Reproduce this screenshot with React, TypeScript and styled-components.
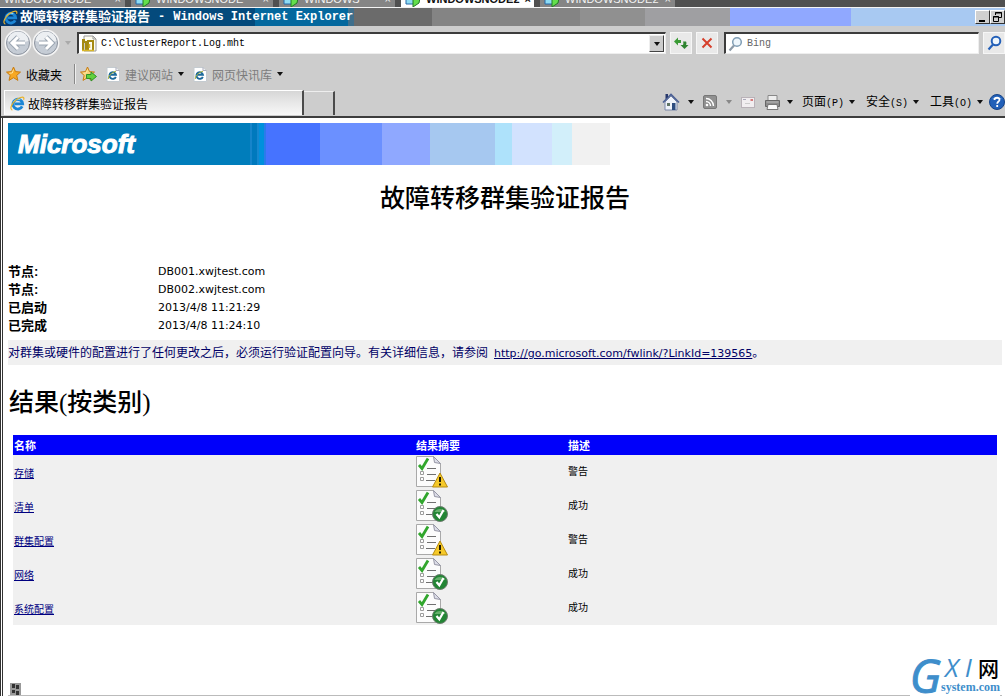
import React from "react";
import styled, { createGlobalStyle } from "styled-components";

const ui = `"Liberation Sans", "Noto Sans CJK SC", sans-serif`;
const mono = `"Liberation Mono", "Noto Sans CJK SC", monospace`;
const report = `"DejaVu Sans", "Noto Sans CJK SC", sans-serif`;
const serif = `"Liberation Serif", "Noto Sans CJK SC", serif`;

const GlobalStyle = createGlobalStyle`
  * { box-sizing: border-box; }
  body { margin: 0; background: #fff; font-family: ${ui}; font-size: 12px; color: #000; }
  button { font: inherit; color: inherit; padding: 0; margin: 0; border: 0; background: none; }
  svg { display: block; flex: none; }
`;

const Window = styled.div`
  display: flex;
  flex-direction: column;
  height: 100vh;
  overflow: hidden;
  position: relative;
`;

const SessionStrip = styled.nav`
  display: flex;
  gap: 6px;
  height: 8px;
  flex: none;
  overflow: hidden;
  background: #505050;
  border-bottom: 1px solid #f4f4f4;
`;

const SessionTab = styled.button<{ $active?: boolean; $width: number }>`
  display: flex;
  align-items: center;
  gap: 5px;
  flex: none;
  width: ${(p) => p.$width}px;
  height: 20px;
  margin-top: -11px;
  padding: 0 4px;
  font-size: 11px;
  line-height: 20px;
  font-weight: ${(p) => (p.$active ? "bold" : "normal")};
  background: ${(p) => (p.$active ? "#ffffff" : "#858585")};
  color: ${(p) => (p.$active ? "#111" : "#f4f4f4")};
  span:last-child { margin-left: auto; }
`;

const TitleBar = styled.header`
  display: flex;
  align-items: center;
  height: 18px;
  flex: none;
  padding-left: 3px;
  color: #fff;
  font: bold 13px/18px ${ui};
  background: linear-gradient(
    90deg,
    #06376c 0 110px, #044a7c 110px 255px, #04689e 255px 348px, #3f6f8c 348px 354px,
    #6b6b6b 354px 432px, #848484 432px 580px, #909090 580px 645px, #9f9fa2 645px 730px,
    #90a8ff 730px 851px, #a8c9f2 851px
  );
`;

const TitleText = styled.h1`
  display: flex;
  gap: 8px;
  flex: 1;
  margin: 0 0 0 2px;
  font: inherit;
  white-space: pre;
`;

const TitleLatin = styled.span`
  font: bold 12px/18px "Liberation Mono", monospace;
`;

const CaptionButton = styled.button`
  width: 15px;
  height: 14px;
  background: #d0d0d0;
  border: 1px solid;
  border-color: #fff #333 #333 #fff;
`;

const Chrome = styled.div`
  flex: none;
  background: #cdcdcd;
  border-left: 1px solid #222;
`;

const NavRow = styled.div`
  display: flex;
  align-items: center;
  height: 34px;
  padding-left: 3px;
`;

const BackForward = styled.div`
  display: flex;
  width: 73px;
`;

const PlainButton = styled.button`
  display: flex;
  align-items: center;
`;

const AddressBox = styled.div`
  display: flex;
  align-items: center;
  flex: 1;
  height: 22px;
  padding: 1px 1px 1px 2px;
  background: #fff;
  border: 1px solid;
  border-color: #3c3c3c #eee #eee #3c3c3c;
  border-width: 2px 1px 1px 2px;
`;

const TextInput = styled.input`
  flex: 1;
  min-width: 0;
  height: 18px;
  margin-left: 4px;
  padding: 0;
  border: 0;
  outline: 0;
  background: transparent;
  font: 10px/18px ${mono};
  color: #000;
  &::placeholder { color: #666; opacity: 1; }
`;

const DropButton = styled.button`
  display: flex;
  align-items: center;
  justify-content: center;
  width: 15px;
  height: 17px;
  background: #cdcdcd;
  border: 1px solid;
  border-color: #eee #444 #444 #eee;
`;

const ToolButton = styled.button`
  display: flex;
  align-items: center;
  justify-content: center;
  flex: none;
  width: 22px;
  height: 22px;
  margin-left: 4px;
  background: #e9e9e9;
  border: 1px solid #f6f6f6;
`;

const SearchBox = styled(AddressBox)`
  flex: 0 0 255px;
  margin-left: 6px;
`;

const FavoritesRow = styled.div`
  display: flex;
  align-items: center;
  height: 28px;
  padding-left: 5px;
`;

const LinkButton = styled(PlainButton)<{ $muted?: boolean }>`
  gap: 5px;
  margin-right: 9px;
  color: ${(p) => (p.$muted ? "#7c7c7c" : "#000")};
`;

const Divider = styled.span`
  width: 2px;
  height: 20px;
  margin: 0 4px 0 3px;
  border-left: 1px solid #888;
  border-right: 1px solid #eee;
`;

const TabRow = styled.div`
  display: flex;
  align-items: flex-end;
  height: 30px;
  border-bottom: 2px solid #3d3d3d;
`;

const PageTab = styled.button`
  display: flex;
  align-items: center;
  gap: 3px;
  width: 300px;
  height: 25px;
  margin: 0 0 1px 3px;
  padding: 1px 0 0 5px;
  border: solid #fff;
  border-width: 1px 0 0 1px;
  border-right: 2px solid #4a4a4a;
  background: linear-gradient(#d6d6d6, #e8e8e8 50%, #f8f8f8);
`;

const NewTab = styled.button`
  width: 31px;
  height: 24px;
  margin-bottom: 1px;
  border-top: 1px solid #eee;
  border-right: 2px solid #4a4a4a;
  background: #cdcdcd;
`;

const CommandBar = styled.div`
  display: flex;
  align-items: center;
  height: 28px;
  margin-left: auto;
`;

const Command = styled(PlainButton)<{ $gap?: number }>`
  gap: ${(p) => p.$gap ?? 6}px;
  margin-right: 9px;
  white-space: nowrap;
`;

const Menu = styled(PlainButton)`
  gap: 5px;
  margin-right: 11px;
  white-space: nowrap;
  &:last-of-type { margin: 0; }
`;

const MenuGroup = styled.div`
  display: flex;
  margin-right: 6px;
`;

const Key = styled.span`
  font: 10px/16px ${mono};
`;

const Page = styled.main`
  flex: 1;
  min-height: 0;
  display: flex;
  flex-direction: column;
  padding: 5px 3px 0 5px;
  border-left: 3px double #333;
  background: #fff;
`;

const Banner = styled.div`
  display: flex;
  flex: none;
  width: 602px;
  max-width: 100%;
  height: 42px;
  padding-left: 10px;
  background: linear-gradient(
    90deg,
    #007dbb 0 242px, #1684ca 242px 244px, #0079bd 244px 249px, #1687ce 249px 251px,
    #0090dc 251px 256px, #2b7bea 256px 258px, #4673ff 258px 312px, #6b90ff 312px 374px,
    #8fa8ff 374px 422px, #a6c8f0 422px 487px, #aee2fb 487px 504px, #d2e2fe 504px 544px,
    #d2effa 544px 564px, #f1f1f1 564px
  );
`;

const Logo = styled.span`
  font: italic bold 26px/43px "Liberation Sans", Arial, sans-serif;
  color: #fff;
  -webkit-text-stroke: 1px #fff;
`;

const Title = styled.h1`
  flex: none;
  margin: 16px 0 46px;
  font: 500 25px/36px ${serif};
  text-align: center;
`;

const Summary = styled.table`
  flex: none;
  align-self: flex-start;
  border-collapse: collapse;
  font: 11px/18px ${report};
  th {
    width: 150px;
    padding: 0;
    text-align: left;
    font: bold 13px/18px ${ui};
  }
  td { padding: 0; }
`;

const Notice = styled.p`
  flex: none;
  margin: 5px 0 0;
  padding-top: 1px;
  background: #f0f0f0;
  color: #000066;
  font: 12px/24px ${ui};
  a { margin-left: 6px; color: #000066; font: 11px/20px ${report}; }
`;

const SectionTitle = styled.h2`
  flex: none;
  margin: 20px 0 14px 1px;
  font: 500 25px/36px ${serif};
`;

const Results = styled.table`
  flex: none;
  margin: 0 5px;
  border-collapse: collapse;
  table-layout: fixed;
  background: #f0f0f0;
  font: 10px/16px ${ui};
  th {
    height: 20px;
    padding: 2px 1px 0;
    background: #0000fa;
    color: #fff;
    text-align: left;
    font: bold 11px/16px ${ui};
  }
  td { height: 34px; padding: 0 1px; vertical-align: middle; }
  td:first-child { padding-top: 4px; }
  a { color: #000080; }
`;

const StatusLine = styled.footer`
  display: flex;
  align-items: flex-end;
  margin-top: auto;
  padding-left: 2px;
  border-bottom: 1px solid #bbb;
`;

const Watermark = styled.div`
  position: absolute;
  right: 5px;
  bottom: 0;
  display: flex;
  height: 42px;
  background: #fff;
  color: #3e8ecb;
`;

const BigG = styled.span`
  font: italic 46px/42px "Open Sans", sans-serif;
  -webkit-text-stroke: 1px #3e8ecb;
`;

const MarkColumn = styled.span`
  display: flex;
  flex-direction: column;
`;

const MarkTop = styled.span`
  display: flex;
  justify-content: space-between;
  padding: 0 1px 0 4px;
  font: italic 26px/26px "Open Sans", sans-serif;
  b { color: #000; font: 500 21px/26px "Noto Sans CJK SC", sans-serif; }
`;

const MarkBottom = styled.span`
  font: bold 12px/14px "Liberation Serif", serif;
`;

const Caret = ({ color = "#111" }: { color?: string }) => (
  <svg width="6" height="4" viewBox="0 0 6 4"><path d="M0 0h6L3 4z" fill={color} /></svg>
);

const IELogo = ({ size = 15 }: { size?: number }) => (
  <svg width={size} height={size} viewBox="0 0 16 16" fill="none">
    <path d="M13 11A5.200 5.200 0 1 1 13.500 8.300H5" stroke="#1c86d6" strokeWidth="3" />
    <path d="M4 6.500A5 5 0 0 1 11 4" stroke="#8ad2f8" strokeWidth="1.300" />
    <path d="M2.500 15C-1 14 2 7.500 7 3.800 12 .3 16 .3 14.500 4" stroke="#e9b32b" strokeWidth="1.300" />
  </svg>
);

const IEPage = () => (
  <svg width="14" height="15" viewBox="0 0 14 15" fill="none">
    <path d="M1 .5h9l3.500 3v11H1z" fill="#fff" stroke="#c4cbd0" />
    <path d="M10 .5v3h3.500" stroke="#aab" />
    <path d="M9.800 9.800A3.300 3.300 0 1 1 10 7.900H4.500" stroke="#1d6a9c" strokeWidth="1.900" />
    <path d="M2.500 12C1.500 10 5 5.500 10 4.200" stroke="#a5ae35" />
  </svg>
);

const RoundArrow = ({ flip }: { flip?: boolean }) => (
  <svg width="28" height="28" viewBox="0 0 28 28" fill="none">
    <circle cx="14" cy="14" r="12.500" fill="#dfe3e8" stroke="#f4f4f4" strokeWidth="2" />
    <circle cx="14" cy="14" r="11.500" fill="#c5ccd5" stroke="#8d949f" />
    <path d="M3.500 12a10.500 9.500 0 0 1 21 0q-10 3-21 0" fill="#eceff2" />
    <path
      d={flip ? "M7 14h12M14 8l6 6-6 6" : "M21 14H9M14 8l-6 6 6 6"}
      stroke="#9aa5b1" strokeWidth="5"
    />
    <path
      d={flip ? "M7 14h12M14 8l6 6-6 6" : "M21 14H9M14 8l-6 6 6 6"}
      stroke="#fff" strokeWidth="3"
    />
  </svg>
);

const Star = ({ add }: { add?: boolean }) => (
  <svg width={add ? 17 : 15} height="16" viewBox={add ? "0 0 17 16" : "0 0 15 16"}>
    <path
      d="M7.500 1l2 4.600 5 .5-3.800 3.300 1.200 5-4.400-2.700L3 14.400l1.200-5L.5 6.100l5-.5z"
      fill={add ? "#f5d37a" : "#f7a823"} stroke="#c97d12"
    />
    <path d="M7.500 3.500L6.300 7l-3 .2" stroke="#ffe59b" fill="none" />
    {add && <path d="M6.500 8.500h4.500V6l5.500 4.500L11 15v-2.500H6.500z" fill="#62d13c" stroke="#2f9228" />}
  </svg>
);

const Magnifier = ({ strong }: { strong?: boolean }) => (
  <svg width="15" height="16" viewBox="0 0 15 16" fill="none">
    <circle cx="9" cy="6" r="4.300" fill="#eef6fc" stroke={strong ? "#2460b8" : "#7f9db5"} strokeWidth={strong ? 2 : 1.5} />
    <path d="M6 9.500L1.500 14.500" stroke={strong ? "#2460b8" : "#8c9aa8"} strokeWidth="2.200" />
  </svg>
);

const PageFile = () => (
  <svg width="16" height="17" viewBox="0 0 16 17" fill="none">
    <path d="M3 1h9l3 3v12H3z" fill="#fffdf0" stroke="#999" />
    <path d="M12 1v3h3" stroke="#999" />
    <path d="M1 5h3M2 15V7h3v8M7 15V6h5v9" stroke="#a58a12" strokeWidth="2" />
    <path d="M1 15.500h12M8.500 9v4" stroke="#d8b62a" strokeWidth="1.500" />
  </svg>
);

const Refresh = () => (
  <svg width="16" height="14" viewBox="0 0 16 14" fill="none">
    <path d="M1 5.500L5 1.500v2.500h3v3H5v2.500z" fill="#3a9b35" />
    <path d="M11.500 13L7.500 9h2.500c.5-1.500.5-2.500 0-3.500h3c.6 1 .6 2.200 0 3.500h2.500z" fill="#2f8530" />
  </svg>
);

const Stop = () => (
  <svg width="12" height="12" viewBox="0 0 12 12" fill="none">
    <path d="M1.500 1.500l9 9M10.500 1.500l-9 9" stroke="#d6402c" strokeWidth="2" />
  </svg>
);

const Home = () => (
  <svg width="18" height="18" viewBox="0 0 18 18" fill="none">
    <path d="M3 9l6-6 6 6v8H3z" fill="#eef2fa" stroke="#7886a8" />
    <path d="M1 9.500L9 1.500l8 8" stroke="#4a5f94" strokeWidth="1.600" />
    <path d="M3.500 1h2.500v3L3.500 6z" fill="#27386c" />
    <path d="M10 10h3.500v7H10z" fill="#2c4c80" />
    <path d="M5 10h3v3H5z" fill="#5f7466" />
  </svg>
);

const Feed = () => (
  <svg width="14" height="14" viewBox="0 0 14 14" fill="none">
    <rect x=".5" y=".5" width="13" height="13" rx="1.500" fill="#909090" stroke="#777" />
    <circle cx="4" cy="10" r="1.300" fill="#fff" />
    <path d="M3 6.500A4.500 4.500 0 0 1 7.500 11M3 3.500A7.500 7.500 0 0 1 10.500 11" stroke="#fff" strokeWidth="1.400" />
  </svg>
);

const Mail = () => (
  <svg width="14" height="11" viewBox="0 0 14 11" fill="none">
    <rect x=".5" y=".5" width="13" height="10" fill="#f1eef0" stroke="#b9b2b8" />
    <path d="M2 2.500h3" stroke="#a8a8b8" />
    <path d="M9.500 2h2.500v2H9.500z" fill="#d67b7b" />
    <path d="M4 6.500h5" stroke="#ccc" />
  </svg>
);

const Printer = () => (
  <svg width="17" height="15" viewBox="0 0 17 15" fill="none">
    <path d="M4 .5h9v5H4z" fill="#eee" stroke="#888" />
    <path d="M1.500 5.500h14v6h-14z" fill="#8b8b8b" stroke="#666" />
    <path d="M2.500 7h12" stroke="#bbb" />
    <path d="M4 9.500h9l1 5H3z" fill="#fafafa" stroke="#777" />
  </svg>
);

const Help = () => (
  <svg width="16" height="16" viewBox="0 0 16 16" fill="none">
    <circle cx="8" cy="8" r="7.500" fill="#2260b8" stroke="#174488" />
    <path d="M3 5a6 4 0 0 1 10 0" fill="#6ea1e0" />
    <path d="M5.500 6C5.500 3 10.800 3 10.500 6c-.2 1.500-2.300 1.700-2.300 3.800M8.200 11v2" stroke="#fff" strokeWidth="1.800" />
  </svg>
);

const ReportIcon = ({ warn }: { warn?: boolean }) => (
  <svg width="32" height="32" viewBox="0 0 32 32" fill="none" role="img" aria-label={warn ? "警告" : "成功"}>
    <path d="M.5.5h17l7 7v23H.5z" fill="#fcfcfc" stroke="#a9a9a9" />
    <path d="M17.500.5l1 6 6 1z" fill="#dcdde8" stroke="#9696a5" />
    <path d="M11 12.500h9M11 18.500h9M10 24.500h9" stroke="#707070" />
    <path d="M4.500 15.500h3v3h-3zM4.500 21.500h3v3h-3z" fill="#fff" stroke="#9c9c9c" />
    <path d="M3 9l3 3.500 6-10" stroke="#31a62d" strokeWidth="2.800" />
    {warn ? (
      <>
        <path d="M24 17l7.500 14h-15z" fill="#f6c928" stroke="#b68b13" strokeLinejoin="round" />
        <path d="M24 21v5M24 27.500v2" stroke="#221a00" strokeWidth="2" />
      </>
    ) : (
      <>
        <circle cx="24" cy="24" r="7.500" fill="#238535" stroke="#6d7d6e" />
        <path d="M18.500 22a6 5 0 0 1 11 0" fill="#67b06c" />
        <path d="M20.500 24l2.800 3.300L27.500 20" stroke="#fff" strokeWidth="2.200" />
      </>
    )}
  </svg>
);

const SessionIcon = () => (
  <svg width="16" height="16" viewBox="0 0 16 16">
    <path d="M1 1h9v12H1z" fill="#8edcf5" stroke="#2468a8" />
    <path d="M8 3l7 4-1 5-6 4z" fill="#63df4c" stroke="#237a26" />
  </svg>
);

const sessions = [
  { name: "WINDOWSNODE", width: 125 },
  { name: "WINDOWSNODE", width: 142 },
  { name: "WINDOWS", width: 116 },
  { name: "WINDOWSNODE2", width: 133, active: true },
  { name: "WINDOWSNODE2", width: 135 },
];

const facts = [
  ["节点:", "DB001.xwjtest.com"],
  ["节点:", "DB002.xwjtest.com"],
  ["已启动", "2013/4/8 11:21:29"],
  ["已完成", "2013/4/8 11:24:10"],
];

const results = [
  { name: "存储", warn: true },
  { name: "清单", warn: false },
  { name: "群集配置", warn: true },
  { name: "网络", warn: false },
  { name: "系统配置", warn: false },
];

const menus = [["页面", "(P)"], ["安全", "(S)"], ["工具", "(O)"]];

export default function App() {
  return (
    <Window>
      <GlobalStyle />
      <SessionStrip>
        {sessions.map((s, i) => (
          <SessionTab key={i} $width={s.width} $active={s.active}>
            {i > 0 && <SessionIcon />}
            <span>{s.name}</span>
            <span>×</span>
          </SessionTab>
        ))}
      </SessionStrip>

      <TitleBar>
        <IELogo />
        <TitleText>
          <span>故障转移群集验证报告</span>
          <TitleLatin>-</TitleLatin>
          <TitleLatin>Windows Internet Explorer</TitleLatin>
        </TitleText>
        <CaptionButton aria-label="最小化">
          <svg width="13" height="12" viewBox="0 0 13 12"><path d="M3 9h6v2H3z" /></svg>
        </CaptionButton>
        <CaptionButton aria-label="还原">
          <svg width="13" height="12" viewBox="0 0 13 12" fill="none" stroke="#000">
            <path d="M4.500 4V1.500h6v5H8M4 2h7M2.500 5.500h5v5h-5zM2 6h6" />
          </svg>
        </CaptionButton>
      </TitleBar>

      <Chrome>
        <NavRow>
          <BackForward>
            <PlainButton aria-label="后退"><RoundArrow /></PlainButton>
            <PlainButton aria-label="前进"><RoundArrow flip /></PlainButton>
            <LinkButton aria-label="最近的页面"><span /><Caret color="#aaa" /></LinkButton>
          </BackForward>
          <AddressBox>
            <PageFile />
            <TextInput aria-label="地址" defaultValue="C:\ClusterReport.Log.mht" />
            <DropButton aria-label="显示地址"><Caret /></DropButton>
          </AddressBox>
          <ToolButton aria-label="刷新"><Refresh /></ToolButton>
          <ToolButton aria-label="停止"><Stop /></ToolButton>
          <SearchBox>
            <Magnifier />
            <TextInput aria-label="搜索" placeholder="Bing" />
          </SearchBox>
          <ToolButton aria-label="搜索"><Magnifier strong /></ToolButton>
        </NavRow>

        <FavoritesRow>
          <LinkButton><Star />收藏夹</LinkButton>
          <Divider />
          <LinkButton aria-label="添加到收藏夹栏"><Star add /></LinkButton>
          <LinkButton $muted><IEPage />建议网站<Caret /></LinkButton>
          <LinkButton $muted><IEPage />网页快讯库<Caret /></LinkButton>
        </FavoritesRow>

        <TabRow>
          <PageTab><IELogo />故障转移群集验证报告</PageTab>
          <NewTab aria-label="新选项卡" />
          <CommandBar>
            <Command aria-label="主页" $gap={8}><Home /><Caret /></Command>
            <Command aria-label="源" $gap={9}><Feed /><Caret color="#888" /></Command>
            <Command aria-label="阅读邮件"><Mail /></Command>
            <Command aria-label="打印"><Printer /><Caret /></Command>
            <MenuGroup>
              {menus.map(([label, key]) => (
                <Menu key={key}>
                  <span>{label}<Key>{key}</Key></span>
                  <Caret />
                </Menu>
              ))}
            </MenuGroup>
            <PlainButton aria-label="帮助"><Help /></PlainButton>
          </CommandBar>
        </TabRow>
      </Chrome>

      <Page>
        <Banner><Logo>Microsoft</Logo></Banner>
        <Title>故障转移群集验证报告</Title>
        <Summary>
          <tbody>
            {facts.map(([label, value], i) => (
              <tr key={i}>
                <th scope="row">{label}</th>
                <td>{value}</td>
              </tr>
            ))}
          </tbody>
        </Summary>
        <Notice>
          对群集或硬件的配置进行了任何更改之后，必须运行验证配置向导。有关详细信息，请参阅
          <a href="http://go.microsoft.com/fwlink/?LinkId=139565">http://go.microsoft.com/fwlink/?LinkId=139565</a>。
        </Notice>
        <SectionTitle>结果(按类别)</SectionTitle>
        <Results>
          <colgroup>
            <col width="402" />
            <col width="152" />
            <col />
          </colgroup>
          <thead>
            <tr><th>名称</th><th>结果摘要</th><th>描述</th></tr>
          </thead>
          <tbody>
            {results.map((r) => (
              <tr key={r.name}>
                <td><a href="#detail">{r.name}</a></td>
                <td><ReportIcon warn={r.warn} /></td>
                <td>{r.warn ? "警告" : "成功"}</td>
              </tr>
            ))}
          </tbody>
        </Results>
        <StatusLine>
          <svg width="11" height="12" viewBox="0 0 11 12">
            <path d="M0 0h11v12H0z" fill="#999" />
            <path d="M2 1h3v4H2zM6 2h3v4H6zM2 7h3v3H2zM6 8h3v4H6z" fill="#333" />
          </svg>
        </StatusLine>
      </Page>

      <Watermark>
        <BigG>G</BigG>
        <MarkColumn>
          <MarkTop><span>X</span><span>I</span><b>网</b></MarkTop>
          <MarkBottom>system.com</MarkBottom>
        </MarkColumn>
      </Watermark>
    </Window>
  );
}
